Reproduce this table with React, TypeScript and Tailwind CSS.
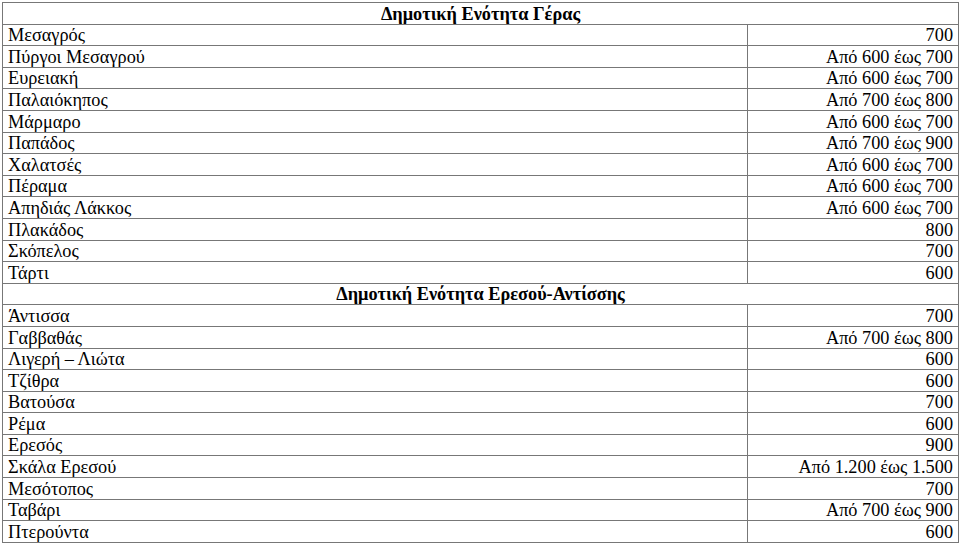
const GERA: [string, string][] = [
  ["Μεσαγρός", "700"],
  ["Πύργοι Μεσαγρού", "Από 600 έως 700"],
  ["Ευρειακή", "Από 600 έως 700"],
  ["Παλαιόκηπος", "Από 700 έως 800"],
  ["Μάρμαρο", "Από 600 έως 700"],
  ["Παπάδος", "Από 700 έως 900"],
  ["Χαλατσές", "Από 600 έως 700"],
  ["Πέραμα", "Από 600 έως 700"],
  ["Απηδιάς Λάκκος", "Από 600 έως 700"],
  ["Πλακάδος", "800"],
  ["Σκόπελος", "700"],
  ["Τάρτι", "600"],
];

const ERESOS: [string, string][] = [
  ["Άντισσα", "700"],
  ["Γαββαθάς", "Από 700 έως 800"],
  ["Λιγερή – Λιώτα", "600"],
  ["Τζίθρα", "600"],
  ["Βατούσα", "700"],
  ["Ρέμα", "600"],
  ["Ερεσός", "900"],
  ["Σκάλα Ερεσού", "Από 1.200 έως 1.500"],
  ["Μεσότοπος", "700"],
  ["Ταβάρι", "Από 700 έως 900"],
  ["Πτερούντα", "600"],
];

const cell = "border border-[#777777] px-[5px] pt-[1px] pb-0 leading-[19px] align-bottom";

function Heading({ title }: { title: string }) {
  return (
    <tr className="h-[21.6px]">
      <td colSpan={2} className={`${cell} text-center font-bold`}>
        {title}
      </td>
    </tr>
  );
}

function Rows({ rows }: { rows: [string, string][] }) {
  return (
    <>
      {rows.map(([place, price]) => (
        <tr key={place} className="h-[21.6px]">
          <td className={`${cell} text-left`}>{place}</td>
          <td className={`${cell} text-right`}>{price}</td>
        </tr>
      ))}
    </>
  );
}

export default function App() {
  return (
    <div className="min-h-[545px] w-[960px] bg-white px-[2px] pt-[2px] text-black">
      <table
        className="w-[956px] table-fixed border-collapse text-[18.3px]"
        style={{ fontFamily: '"Liberation Serif", "Times New Roman", serif' }}
      >
        <colgroup>
          <col className="w-[745px]" />
          <col className="w-[211px]" />
        </colgroup>
        <tbody>
          <Heading title="Δημοτική Ενότητα Γέρας" />
          <Rows rows={GERA} />
          <Heading title="Δημοτική Ενότητα Ερεσού-Αντίσσης" />
          <Rows rows={ERESOS} />
        </tbody>
      </table>
    </div>
  );
}
